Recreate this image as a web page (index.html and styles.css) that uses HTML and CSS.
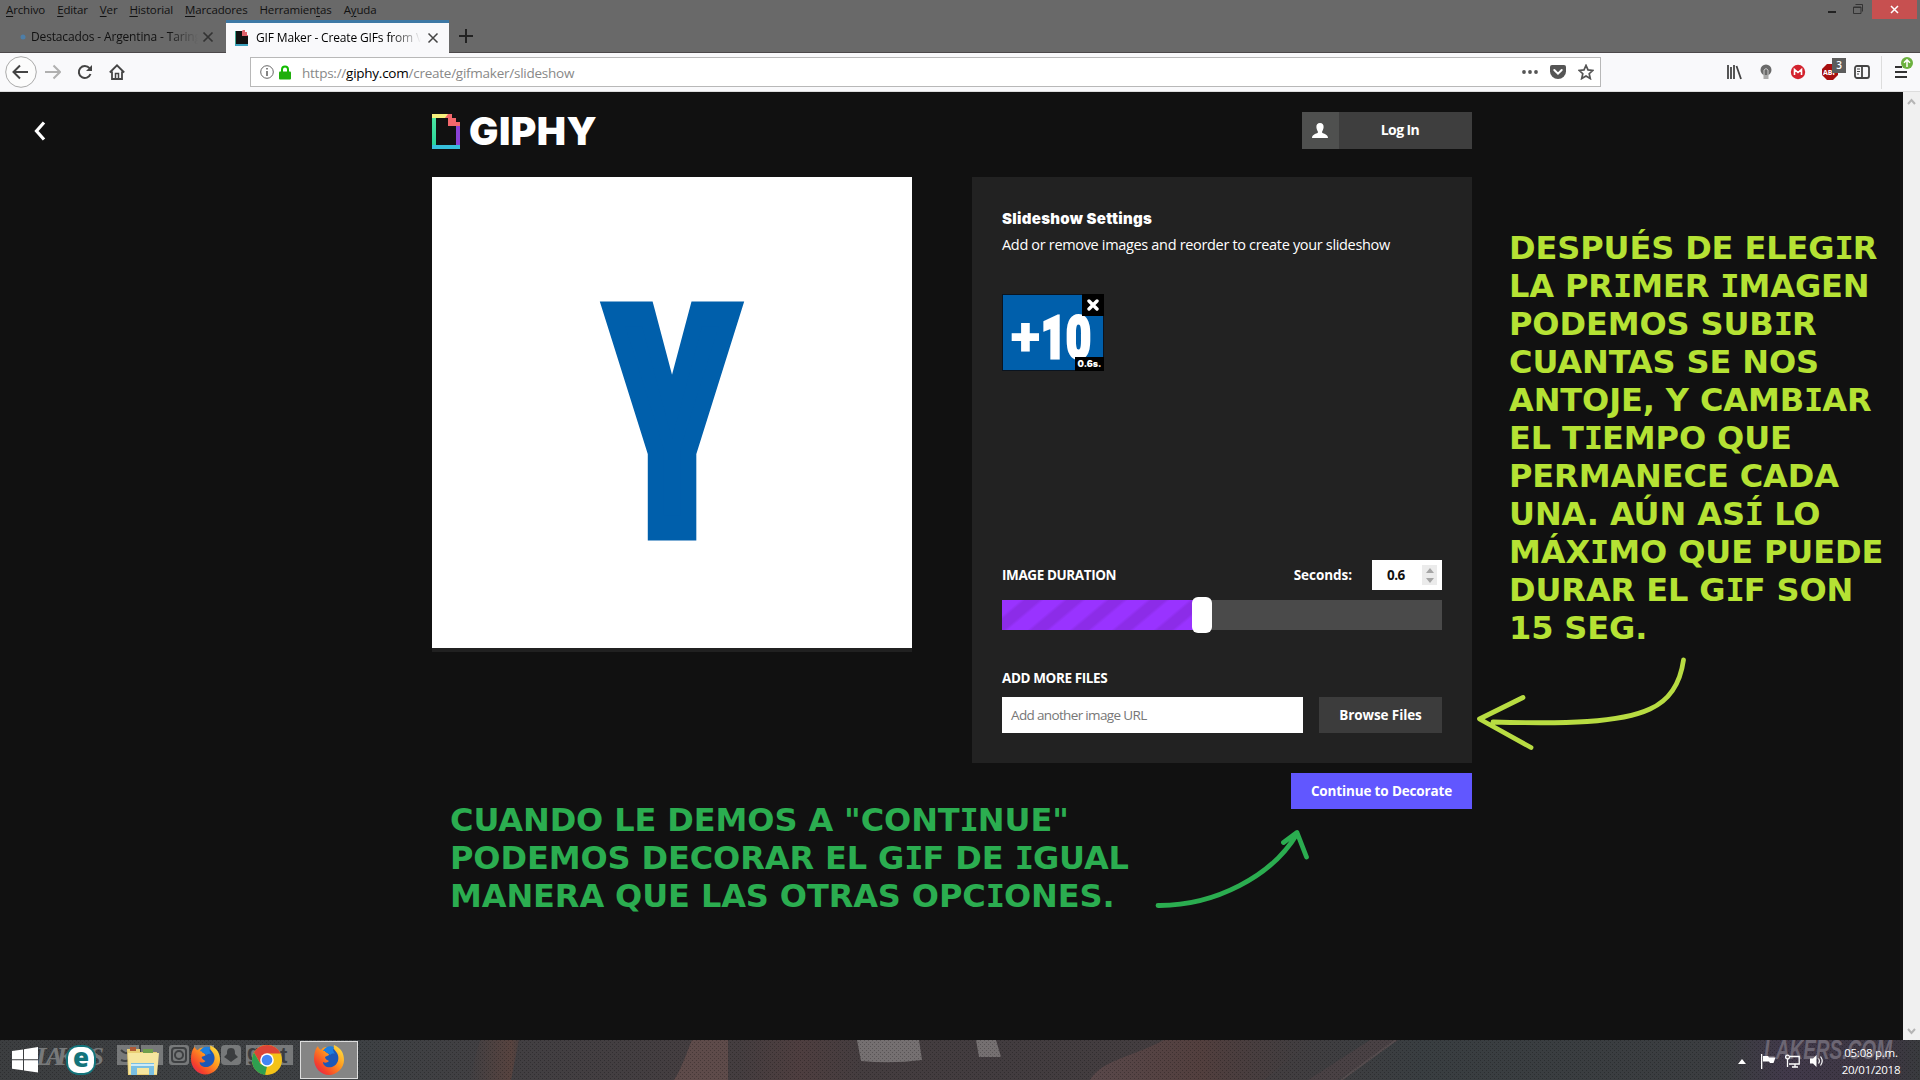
FILE: index.html
```html
<!DOCTYPE html>
<html lang="es">
<head>
  <meta charset="UTF-8">
  <title>GIF Maker - Create GIFs from Videos</title>
  <link rel="stylesheet" href="styles.css">
</head>
<body>
  <svg width="0" height="0" class="defs">
    <defs>
      <linearGradient id="foxBody" x1="1" y1="0" x2="0" y2="1">
        <stop offset="0" stop-color="#fff04a"/>
        <stop offset="0.4" stop-color="#ff9a1e"/>
        <stop offset="0.75" stop-color="#f5412c"/>
        <stop offset="1" stop-color="#d8176b"/>
      </linearGradient>
      <symbol id="firefox" viewBox="0 0 32 32">
        <circle cx="16" cy="16" r="12" fill="#1c58b8"/>
        <path d="M21 1c-1 4 1 5 3 8 3 5 1 12-5 14-5 1-9-1-9-5 2 1 4 1 6-1-2-1-4-2-4-4 1-1 3-1 4-2 0-2-3-2-4-4 0-2 1-3 2-4-3 0-5 1-6 3-2-1-3-3-3-4-3 3-4 8-4 13 0 9 7 16 15 16s15-7 15-15c0-7-3-12-10-15z" fill="url(#foxBody)"/>
        <path d="M10 7c2-4 7-6 11-4-2 3 0 5 1 7-2-1-4 0-5 1-1-2-4-2-5-4z" fill="#1d7fe0"/>
      </symbol>
    </defs>
  </svg>

  <div class="titlebar">
    <nav class="menubar">
      <span><u>A</u>rchivo</span>
      <span><u>E</u>ditar</span>
      <span><u>V</u>er</span>
      <span><u>H</u>istorial</span>
      <span><u>M</u>arcadores</span>
      <span>Herramien<u>t</u>as</span>
      <span>A<u>y</u>uda</span>
      <div class="window-buttons">
        <svg width="10" height="20" viewBox="0 0 10 20"><path d="M1 12h8" stroke="#222" stroke-width="2"/></svg>
        <svg width="12" height="20" viewBox="0 0 12 20" fill="none" stroke="#333"><path d="M1.500 7v6.500h7.500V7z M1 7.500h8M3.500 4.500h7v7"/></svg>
        <div class="close"><svg width="9" height="9" viewBox="0 0 9 9"><path d="M1 1l7 7M8 1l-7 7" stroke="#fff" stroke-width="1.500"/></svg></div>
      </div>
    </nav>
    <div class="tabs">
      <div class="tab">
        <svg class="favicon" width="6" height="12" viewBox="0 0 6 12"><circle cx="3" cy="6" r="2.500" fill="#4d7ea8"/></svg>
        <span class="tab-title">Destacados - Argentina - Taringa!</span>
        <svg class="tab-close" width="12" height="12" viewBox="0 0 12 12"><path d="M1.500 1.500l9 9M10.500 1.500l-9 9" stroke="#333" stroke-width="1.700"/></svg>
      </div>
      <div class="tab active">
        <svg class="favicon" width="14" height="16" viewBox="0 0 14 16"><path d="M0 1h8v14H0z" fill="#41a58f"/><path d="M1 1h7v5h5v8H1z" fill="#111"/><path d="M8 0h2v2h2v3h1v1H7V1z" fill="#e0626b"/><path d="M0 14h13v2H0z" fill="#3ba0bd"/></svg>
        <span class="tab-title">GIF Maker - Create GIFs from Videos</span>
        <svg class="tab-close" width="12" height="12" viewBox="0 0 12 12"><path d="M1.500 1.500l9 9M10.500 1.500l-9 9" stroke="#444" stroke-width="1.500"/></svg>
      </div>
      <svg class="new-tab" width="14" height="14" viewBox="0 0 14 14"><path d="M7 0v14M0 7h14" stroke="#222" stroke-width="2"/></svg>
    </div>
  </div>

  <div class="toolbar">
    <div class="nav-buttons">
      <svg class="back" width="32" height="32" viewBox="0 0 32 32" fill="none"><circle cx="16" cy="16" r="15.300" fill="#fcfcfc" stroke="#aaa"/><path d="M23 16H9M15 9.500L8.500 16l6.500 6.500" stroke="#444" stroke-width="2"/></svg>
      <svg width="16" height="16" viewBox="0 0 16 16" fill="none"><path d="M0 8h14M8.500 1.500L15 8l-6.500 6.500" stroke="#b0b0b0" stroke-width="2"/></svg>
      <svg width="16" height="16" viewBox="0 0 16 16" fill="none"><path d="M12.500 4.200A6 6 0 1 0 13.500 10" stroke="#444" stroke-width="2"/><path d="M15 1v6H9z" fill="#444"/></svg>
      <svg width="16" height="16" viewBox="0 0 16 16" fill="none"><path d="M.8 8.500L8 1.300l7.200 7.200M3 7.500V15h10V7.500" stroke="#444" stroke-width="1.800"/><path d="M6.500 15v-5.500h3V15" stroke="#444" stroke-width="1.500"/></svg>
    </div>
    <div class="urlbar">
      <svg width="14" height="14" viewBox="0 0 14 14" fill="none" stroke="#666"><circle cx="7" cy="7" r="6.300"/><path d="M7 6v5M7 3v1.600" stroke-width="1.600"/></svg>
      <svg class="lock" width="12" height="15" viewBox="0 0 12 15"><path d="M3 7V4.500a3 3 0 0 1 6 0V7" fill="none" stroke="#12bc00" stroke-width="2"/><rect y="6.500" width="12" height="8" rx="1" fill="#1fae0c"/></svg>
      <span class="url">https://<b>giphy.com</b>/create/gifmaker/slideshow</span>
      <div class="url-actions">
        <svg width="16" height="16" viewBox="0 0 16 16" fill="#555"><circle cx="2" cy="8" r="1.900"/><circle cx="8" cy="8" r="1.900"/><circle cx="14" cy="8" r="1.900"/></svg>
        <svg width="16" height="16" viewBox="0 0 16 16"><path d="M2 1h12a2 2 0 0 1 2 2v4.500a8 7.500 0 0 1-16 0V3a2 2 0 0 1 2-2z" fill="#555"/><path d="M4.300 6L8 9.600 11.700 6" fill="none" stroke="#fff" stroke-width="2" stroke-linecap="round"/></svg>
        <svg width="16" height="16" viewBox="0 0 16 16"><path d="M8 1.400l2 4.500 4.900.5-3.700 3.300 1.100 4.900L8 12.100l-4.300 2.500 1.100-4.900L1.100 6.400 6 5.900z" fill="none" stroke="#555" stroke-width="1.700"/></svg>
      </div>
    </div>
    <div class="extensions">
      <svg width="16" height="16" viewBox="0 0 16 16" stroke="#444" stroke-width="1.800"><path d="M2 1v14M5 3v12M8 1v14M10.500 2l4.500 13"/></svg>
      <svg width="16" height="16" viewBox="0 0 16 16"><circle cx="8" cy="6" r="5.500" fill="#6a6a6a"/><path d="M6 11V6q2-3 4 0v5" fill="none" stroke="#ccc"/><rect x="5.500" y="11" width="5" height="4" fill="#aaa"/></svg>
      <svg width="16" height="16" viewBox="0 0 16 16"><circle cx="8" cy="8" r="7.200" fill="#d3232e"/><path d="M4.500 11V5.500L8 8.500l3.500-3V11" fill="none" stroke="#fff" stroke-width="1.600"/></svg>
      <div class="abp">
        <svg width="16" height="16" viewBox="0 0 16 16"><path d="M5 0h6l5 5v6l-5 5H5l-5-5V5z" fill="#a80f0f"/><text x="1" y="11" class="abp-text">ABP</text></svg>
        <span class="badge">3</span>
      </div>
      <svg width="16" height="16" viewBox="0 0 16 16" fill="none" stroke="#444"><rect x="1" y="2" width="14" height="12" rx="2" stroke-width="1.800"/><path d="M8 2v12" stroke-width="1.800"/><path d="M3 5h3M3 7.500h3M3 10h2"/></svg>
    </div>
    <div class="app-menu">
      <svg width="12" height="16" viewBox="0 0 12 16" stroke="#333" stroke-width="2"><path d="M0 3h7M0 8h12M0 13h12"/></svg>
      <svg class="update" width="12" height="12" viewBox="0 0 12 12"><circle cx="6" cy="6" r="6" fill="#6cb13f"/><path d="M6 10V3M3 5.700L6 2.700l3 3" fill="none" stroke="#fff" stroke-width="1.500"/></svg>
    </div>
  </div>

  <div class="viewport">
    <main class="page">
      <svg class="page-back" width="14" height="20" viewBox="0 0 14 20"><path d="M11 1.500L3.500 10l7.500 8.500" fill="none" stroke="#fff" stroke-width="3.200"/></svg>
      <div class="content">
        <header class="header">
          <div class="logo">
            <svg width="28" height="35" viewBox="0 0 28 35">
              <defs><linearGradient id="lg" x1="0" y1="0" x2="0" y2="1"><stop offset="0" stop-color="#4de6a0"/><stop offset="1" stop-color="#27d39b"/></linearGradient></defs>
              <path d="M0 2h4v30H0z" fill="url(#lg)"/>
              <path d="M24 11h4v21h-4z" fill="#8a42d6"/>
              <path d="M0 0h16v4H0z" fill="#f6ef7c"/>
              <path d="M0 31h28v4H0z" fill="#36bfdc"/>
              <path d="M16 0h4v4h4v4h4v4H16V4h-3z" fill="#f2686c"/>
            </svg>
            <span>GIPHY</span>
          </div>
          <div class="login">
            <div class="login-icon">
              <svg width="16" height="15" viewBox="0 0 16 15"><path d="M8 0c2.600 0 3.800 1.800 3.600 4.300C11.400 6.500 10.500 8 10 9c0 2 6 1.500 6 6H0c0-4.500 6-4 6-6-.5-1-1.400-2.500-1.600-4.700C4.200 1.800 5.400 0 8 0z" fill="#fff"/></svg>
            </div>
            <span>Log In</span>
          </div>
        </header>
        <div class="columns">
          <div class="preview">
            <svg width="480" height="471" viewBox="0 0 480 471">
              <text class="big-letter" transform="translate(240 351) scale(.625 1)">Y</text>
            </svg>
          </div>
          <div class="side">
            <section class="panel">
              <h2>Slideshow Settings</h2>
              <p class="subtitle">Add or remove images and reorder to create your slideshow</p>
              <div class="thumbs">
                <div class="thumb">
                  <svg width="100" height="75" viewBox="0 0 100 75">
                    <text class="thumb-plus" x="7.500" y="61">+</text>
                    <text class="thumb-num" transform="translate(38 62.500) scale(.73 1)">10</text>
                  </svg>
                  <div class="remove"><svg width="12" height="12" viewBox="0 0 12 12"><path d="M2 2l8 8M10 2l-8 8" stroke="#fff" stroke-width="3.400" stroke-linecap="round"/></svg></div>
                  <span class="time">0.6s.</span>
                </div>
              </div>
              <div class="duration-row">
                <label>IMAGE DURATION</label>
                <span class="seconds">Seconds:</span>
                <div class="number">
                  <span>0.6</span>
                  <div class="spinner"><svg width="8" height="15" viewBox="0 0 8 15" fill="#a5a5a5"><path d="M4 0l4 5H0zM4 15l4-5H0z"/></svg></div>
                </div>
              </div>
              <div class="slider">
                <div class="slider-fill"></div>
                <div class="slider-handle"></div>
              </div>
              <label class="add-label">ADD MORE FILES</label>
              <div class="add-row">
                <div class="url-input">Add another image URL</div>
                <div class="browse">Browse Files</div>
              </div>
            </section>
            <div class="continue">Continue to Decorate</div>
          </div>
        </div>
      </div>
    </main>
    <div class="scrollbar">
      <svg width="9" height="7" viewBox="0 0 9 7"><path d="M1 6l3.500-4L8 6" fill="none" stroke="#b5b5b5" stroke-width="2"/></svg>
      <svg width="9" height="7" viewBox="0 0 9 7"><path d="M1 1l3.500 4L8 1" fill="none" stroke="#b5b5b5" stroke-width="2"/></svg>
    </div>
  </div>

  <div class="taskbar">
    <!-- wallpaper showing through the bar -->
    <svg class="wallpaper" width="1920" height="40" viewBox="0 0 1920 40">
      <defs>
        <linearGradient id="wall" x1="0" x2="1" y1="0" y2="0">
          <stop offset="0" stop-color="#3c3e40"/><stop offset="0.190" stop-color="#3e4144"/>
          <stop offset="0.270" stop-color="#423f42"/><stop offset="0.420" stop-color="#453d3f"/>
          <stop offset="0.520" stop-color="#423c3f"/><stop offset="0.650" stop-color="#443e40"/>
          <stop offset="0.740" stop-color="#393e41"/><stop offset="0.900" stop-color="#3b3d40"/>
          <stop offset="0.930" stop-color="#41394a"/><stop offset="0.985" stop-color="#3d3742"/><stop offset="1" stop-color="#393b3e"/>
        </linearGradient>
        <linearGradient id="skin" x1="0" x2="1" y1="0" y2="0">
          <stop offset="0" stop-color="#57433f" stop-opacity="0"/><stop offset="0.850" stop-color="#57433f"/><stop offset="1" stop-color="#57433f" stop-opacity=".4"/>
        </linearGradient>
        <linearGradient id="arm" x1="0" x2="1" y1="0" y2="0">
          <stop offset="0" stop-color="#59484a"/><stop offset="0.500" stop-color="#523f3e"/><stop offset="1" stop-color="#443c3e" stop-opacity="0"/>
        </linearGradient>
        <linearGradient id="glow" x1="0" x2="1" y1="0" y2="0">
          <stop offset="0" stop-color="#543f40" stop-opacity="0"/><stop offset="0.500" stop-color="#543f40" stop-opacity=".6"/><stop offset="1" stop-color="#543f40" stop-opacity="0"/>
        </linearGradient>
        <pattern id="dots" width="4" height="4" patternUnits="userSpaceOnUse"><path d="M0 0h1v1H0zM2 2h1v1H2z" fill="#000" opacity=".25"/></pattern>
      </defs>
      <rect width="1920" height="40" fill="url(#wall)"/>
      <path d="M480 0h39l-8 40h-42z" fill="url(#skin)"/>
      <path d="M692 0h36v40h-54c8-12 12-26 18-40z" fill="#5e4b4a"/>
      <path d="M740 0h120v40H740z" fill="url(#glow)"/>
      <path d="M1164 0h150l-50 40H1090c12-20 40-22 74-40z" fill="url(#arm)"/>
      <path d="M1370 0h28l-60 40h-30z" fill="#494144"/>
      <path d="M1396 0l-55 40" stroke="#554c4e" stroke-width="2"/>
      <path d="M857 0h62l3 20q-30 4-61 1zM976 0h20l5 17h-22z" fill="#757071"/>
      <rect width="1920" height="40" fill="url(#dots)"/>
      <text class="mark-left" x="36" y="25" textLength="68">LAKERS</text>
      <g fill="#77797a">
        <path d="M117 5h22v20h-22zM141 5h22v20h-22zM194 5h20v20h-20zM246 5h22v20h-22zM270 5h23v20h-23z"/>
        <rect x="169" y="5" width="20" height="20" rx="3"/><rect x="221" y="5" width="20" height="20" rx="4"/>
      </g>
      <g fill="none" stroke="#3e4042" stroke-width="2">
        <rect x="172" y="8" width="14" height="14" rx="3"/><circle cx="179" cy="15" r="4"/>
        <path d="M121 10c4 4 6 4 8 1 3-3 4 1 6 0-2 8-8 12-14 9"/>
      </g>
      <path d="M231 8c4 0 4 3 4 6l3 3-3 2-4 3-4-3-3-2 3-3c0-3 0-6 4-6z" fill="#3b3d3f"/>
      <text class="mark-letter" x="247" y="20">g</text>
      <text class="mark-letter" x="280" y="23">t</text>
      <text class="mark-right" x="1764" y="19" textLength="128" lengthAdjust="spacingAndGlyphs">LAKERS.COM</text>
    </svg>
    <div class="apps">
      <svg class="start" width="26" height="26" viewBox="0 0 26 26" fill="#fff"><path d="M0 4l11-1.600V12.300H0zM12 2.200L26 0v12.300H12zM0 13.300h11v9.900L0 21.700zM12 13.300h14V25.500l-14-2.100z"/></svg>
      <svg class="eset" width="32" height="32" viewBox="0 0 32 32"><rect x="1" y="1" width="30" height="30" rx="13" fill="#13747b"/><rect x="3" y="3" width="26" height="26" rx="10" fill="#fff"/><text x="8" y="23">e</text></svg>
      <svg class="explorer" width="34" height="30" viewBox="0 0 34 30"><path d="M1 3h13v3h17v23H2z" fill="#e9cf76"/><path d="M4 1h6v4H4z" fill="#b05a36"/><path d="M17 3h10v5H17z" fill="#6f9f4d"/><path d="M2 7h31l-2 21H3z" fill="#f6e6a0"/><path d="M5 29V17h23v12h-5v-7H11v7z" fill="#79bfe3"/><path d="M5 19h23" stroke="#cdeaf7" stroke-width="2"/></svg>
      <svg class="fox" width="31" height="32"><use href="#firefox"/></svg>
      <svg class="chrome" width="30" height="30" viewBox="0 0 30 30"><circle cx="15" cy="15" r="15" fill="#f4c318"/><path d="M15 0a15 15 0 0 1 13.500 8.500H15L8 18 2 7.500A15 15 0 0 1 15 0z" fill="#dc4437"/><path d="M2 7.500L8.500 19 15 21.500 13 30A15 15 0 0 1 2 7.500z" fill="#2f9e50"/><circle cx="15" cy="15" r="6.800" fill="#fff"/><circle cx="15" cy="15" r="5.300" fill="#4285f4"/></svg>
      <div class="app-active"><svg width="32" height="32"><use href="#firefox"/></svg></div>
    </div>
    <div class="tray">
      <svg width="8" height="5" viewBox="0 0 8 5"><path d="M4 0l4 5H0z" fill="#fff"/></svg>
      <svg class="flag" width="15" height="15" viewBox="0 0 15 15" fill="#fff"><path d="M0 0h1.300v15H0zM2 2h5l1 1.500h6.500L12.500 9H9L8 7.500H2z"/></svg>
      <svg class="network" width="15" height="14" viewBox="0 0 15 14" fill="none" stroke="#fff" stroke-width="1.300"><path d="M5 2.500h9.200v7.500H4M7 13h6M10 10v3M2.500 5v8"/><circle cx="2.500" cy="3" r="1.900"/></svg>
      <svg class="sound" width="14" height="14" viewBox="0 0 14 14"><path d="M0 4.500h3L6.500 1v12L3 9.500H0z" fill="#fff"/><path d="M8.500 4.500q1.800 2.500 0 5M10.500 2.500q3.400 4.500 0 9" fill="none" stroke="#fff" stroke-width="1.200"/></svg>
      <div class="clock"><span>05:08 p.m.</span><span>20/01/2018</span></div>
    </div>
  </div>

  <!-- notes drawn over the page, capital I with serifs -->
  <p class="note note-lime">DESPUÉS DE ELEG<i>I</i>R<br>LA PR<i>I</i>MER <i>I</i>MAGEN<br>PODEMOS SUB<i>I</i>R<br>CUANTAS SE NOS<br>ANTOJE, Y CAMB<i>I</i>AR<br>EL T<i>I</i>EMPO QUE<br>PERMANECE CADA<br>UNA. AÚN AS<i>Í</i> LO<br>MÁX<i>I</i>MO QUE PUEDE<br>DURAR EL G<i>I</i>F SON<br>15 SEG.</p>
  <p class="note note-green">CUANDO LE DEMOS A "CONT<i>I</i>NUE"<br>PODEMOS DECORAR EL G<i>I</i>F DE <i>I</i>GUAL<br>MANERA QUE LAS OTRAS OPC<i>I</i>ONES.</p>
  <svg class="arrow arrow-lime" width="220" height="100" viewBox="1470 655 220 100"><path d="M1683.500 660C1680 685 1668 701 1650 709C1620 723 1565 724 1493 722M1523 697.500L1479.500 719L1531 747.500"/></svg>
  <svg class="arrow arrow-green" width="160" height="90" viewBox="1152 825 160 90"><path d="M1158 905.500C1215 906 1272 876 1297 834M1283.500 842.500L1297 832.500L1306.500 857"/></svg>
</body>
</html>
```

FILE: styles.css
```css
* {
  box-sizing: border-box;
  margin: 0;
  padding: 0;
}

body {
  width: 1920px;
  height: 1080px;
  display: flex;
  flex-direction: column;
  position: relative;
  overflow: hidden;
  background-color: #111;
  font-family: "Open Sans", "Noto Sans", sans-serif;
}

svg {
  display: block;
  flex-shrink: 0;
}

.defs {
  position: absolute;
}

/* Browser window */
.titlebar {
  height: 53px;
  background-color: #696969;
  border-bottom: 1px solid #4c484a;
}

.menubar {
  height: 20px;
  display: flex;
  align-items: center;
  gap: 12px;
  padding-left: 6px;
  font-size: 11.5px;
  line-height: 16px;
  letter-spacing: -0.14px;
  color: #111;
}

.menubar > span {
  padding-bottom: 1px;
}

.menubar u {
  text-underline-offset: 2px;
}

.window-buttons {
  display: flex;
  margin-left: auto;
  height: 20px;
}

.window-buttons svg:nth-child(2) {
  margin: 0 8px 0 15px;
}

.close {
  width: 45px;
  height: 19px;
  margin-right: 3px;
  display: flex;
  align-items: center;
  justify-content: center;
  background-color: #c75050;
}

.tabs {
  height: 33px;
  display: flex;
  align-items: stretch;
}

.tab {
  width: 226px;
  display: flex;
  align-items: center;
  padding: 1px 12px 0 20px;
  font-size: 12px;
  letter-spacing: -0.15px;
  color: #111;
}

.tab-title {
  flex: 1;
  margin: 0 4px 2px 5px;
  white-space: nowrap;
  overflow: hidden;
  -webkit-mask-image: linear-gradient(to right, #000 82%, transparent 100%);
  mask-image: linear-gradient(to right, #000 82%, transparent 100%);
}

.tab.active {
  width: 223px;
  padding: 0 10px 0 9px;
  background-color: #f9f9fb;
  border-top: 3px solid #3d78a5;
  color: #000;
}

.active .tab-title {
  margin: 0 6px 2px 7px;
}

.new-tab {
  margin: 9px 0 0 10px;
}

.toolbar {
  height: 39px;
  display: flex;
  align-items: center;
  background-color: #f9f9fb;
  border-bottom: 1px solid #ddd;
}

.nav-buttons {
  width: 250px;
  display: flex;
  align-items: center;
  gap: 16px;
  padding-left: 5px;
}

.back {
  margin-right: -8px;
}

.urlbar {
  width: 1351px;
  height: 30px;
  display: flex;
  align-items: center;
  padding: 0 6px 0 9px;
  background-color: #fff;
  border: 1px solid #b8b8b8;
}

.lock {
  margin: 0 11px 0 5px;
}

.url {
  font-size: 13.5px;
  letter-spacing: -0.25px;
  color: #888;
  padding-top: 2px;
}

.url b {
  font-weight: 400;
  color: #000;
}

.url-actions {
  display: flex;
  gap: 12px;
  margin-left: auto;
}

.extensions {
  display: flex;
  gap: 16px;
  padding: 0 11px 0 125px;
}

.abp {
  position: relative;
}

.abp-text {
  font: bold 7px "Open Sans", sans-serif;
  fill: #fff;
}

.badge {
  position: absolute;
  left: 10px;
  top: -6px;
  width: 14px;
  height: 15px;
  background-color: #5c5c5c;
  color: #fff;
  font-size: 10px;
  font-weight: 600;
  line-height: 15px;
  text-align: center;
}

.app-menu {
  position: relative;
  height: 33px;
  display: flex;
  align-items: center;
  padding-left: 13px;
  border-left: 1px solid #ddd;
}

.update {
  position: absolute;
  left: 19px;
  top: 1px;
}

/* Page */
.viewport {
  height: 948px;
  display: flex;
}

.page {
  flex: 1;
  display: flex;
  background-color: #111;
  color: #fff;
}

.page-back {
  margin: 29px 385px 0 33px;
}

.content {
  width: 1040px;
}

.header {
  height: 85px;
  display: flex;
  justify-content: space-between;
  padding-top: 20px;
}

.logo {
  height: 39px;
  display: flex;
  align-items: center;
  gap: 9px;
}

.logo span {
  font: 900 39px/38px Inter, sans-serif;
  letter-spacing: 0.5px;
  padding-bottom: 1px;
}

.login {
  width: 170px;
  height: 37px;
  display: flex;
  background-color: #3e3e3e;
  font: bold 14px/36px "Open Sans", sans-serif;
  letter-spacing: -0.6px;
}

.login-icon {
  width: 37px;
  display: flex;
  align-items: center;
  justify-content: center;
  padding-right: 2px;
  background-color: #4f504f;
}

.login span {
  flex: 1;
  text-align: center;
  padding-right: 11px;
}

.columns {
  display: flex;
  gap: 60px;
}

.preview {
  width: 480px;
  height: 475px;
  background-color: #fff;
  border-bottom: 4px solid #212121;
}

.big-letter {
  font: 900 301px Roboto, sans-serif;
  text-anchor: middle;
  fill: #005fab;
  stroke: #005fab;
  stroke-width: 21px;
  vector-effect: non-scaling-stroke;
}

.side {
  width: 500px;
}

.panel {
  height: 586px;
  padding: 30px;
  background-color: #222;
}

.panel h2 {
  font: 900 15px/24px Inter, sans-serif;
  letter-spacing: 0.3px;
}

.subtitle {
  font-size: 14.5px;
  line-height: 28px;
  letter-spacing: -0.33px;
  white-space: nowrap;
}

.thumbs {
  height: 266px;
  padding-top: 35px;
}

.thumb {
  position: relative;
  width: 102px;
  height: 77px;
  border: 1px solid #0a1420;
  background-color: #005fab;
}

.thumb-plus {
  font: 900 56px Roboto, sans-serif;
  fill: #fff;
}

.thumb-num {
  font: 900 59px Roboto, sans-serif;
  fill: #fff;
  stroke: #fff;
  stroke-width: 3px;
}

.remove {
  position: absolute;
  right: -1px;
  top: -1px;
  width: 22px;
  height: 22px;
  display: flex;
  align-items: center;
  justify-content: center;
  background-color: #000;
}

.time {
  position: absolute;
  right: -1px;
  bottom: -1px;
  width: 29px;
  height: 14px;
  background-color: #000;
  font: 900 9px/13px Inter, sans-serif;
  text-align: center;
}

.duration-row {
  height: 30px;
  display: flex;
  align-items: center;
  margin-top: 35px;
}

.panel label,
.seconds {
  font-size: 13.5px;
  font-weight: 700;
  letter-spacing: -0.4px;
}

.panel .seconds {
  margin-left: auto;
  margin-right: 20px;
  letter-spacing: -0.05px;
}

.number {
  width: 70px;
  height: 30px;
  display: flex;
  align-items: center;
  justify-content: space-between;
  padding: 0 5px 0 15px;
  background-color: #fff;
  color: #111;
  font-size: 13.5px;
  font-weight: 700;
  letter-spacing: -0.5px;
}

.spinner {
  width: 15px;
  height: 20px;
  display: flex;
  align-items: center;
  justify-content: center;
  background-color: #ebebeb;
}

.slider {
  height: 30px;
  display: flex;
  align-items: center;
  margin-top: 10px;
  background-color: #4a4a4a;
}

.slider-fill {
  width: 192px;
  height: 30px;
  background: repeating-linear-gradient(140deg, #9933ff 0, #9933ff 12px, #8c2ce8 15px, #8c2ce8 24px, #9933ff 27px);
}

.slider-handle {
  width: 20px;
  height: 36px;
  margin-left: -2px;
  border-radius: 6px;
  background-color: #fff;
}

.add-label {
  display: block;
  margin-top: 38px;
  line-height: 20px;
}

.add-row {
  display: flex;
  gap: 16px;
  margin-top: 9px;
}

.url-input {
  width: 301px;
  height: 36px;
  padding-left: 9px;
  background-color: #fff;
  color: #777;
  font-size: 13.5px;
  line-height: 36px;
  letter-spacing: -0.65px;
}

.browse {
  flex: 1;
  background-color: #3c3c3c;
  font-size: 13.5px;
  font-weight: 700;
  line-height: 36px;
  letter-spacing: -0.1px;
  text-align: center;
}

.continue {
  width: 181px;
  height: 36px;
  margin: 10px 0 0 auto;
  background-color: #6157ff;
  font-size: 13.5px;
  font-weight: 700;
  line-height: 36px;
  letter-spacing: -0.15px;
  text-align: center;
}

.scrollbar {
  width: 17px;
  display: flex;
  flex-direction: column;
  align-items: center;
  justify-content: space-between;
  padding: 6px 0 5px;
  background-color: #f0f0f0;
}

/* Taskbar */
.taskbar {
  position: relative;
  height: 40px;
  display: flex;
  justify-content: space-between;
}

.wallpaper {
  position: absolute;
  left: 0;
  top: 0;
}

.mark-left {
  font: italic bold 26px "Liberation Serif", serif;
  fill: #77797a;
}

.mark-letter {
  font: bold 22px "Liberation Sans", sans-serif;
  fill: #3b3d3f;
}

.mark-right {
  font: italic bold 28px "Liberation Sans", sans-serif;
  fill: #6c6673;
}

.apps,
.tray {
  position: relative;
  display: flex;
  align-items: center;
}

.start {
  margin: 0 27px 0 12px;
}

.eset text {
  font: 900 26px "Open Sans", sans-serif;
  fill: #13747b;
}

.explorer {
  margin: 2px 30px 0 29px;
}

.chrome {
  margin: 0 18px 0 31px;
}

.app-active {
  width: 58px;
  height: 38px;
  display: flex;
  align-items: center;
  justify-content: center;
  background-color: #858585;
  border: 1px solid #ddd;
}

.tray {
  padding-right: 18px;
}

.tray > svg {
  margin-top: 2px;
}

.tray .flag {
  margin-left: 15px;
}

.tray .network {
  margin-left: 9px;
}

.tray .sound {
  margin-left: 10px;
}

.clock {
  width: 62px;
  margin-left: 16px;
  display: flex;
  flex-direction: column;
  align-items: center;
  padding-top: 2px;
  color: #fff;
  font-size: 11.5px;
  line-height: 17px;
  letter-spacing: -0.25px;
}

/* Notes */
.note {
  position: absolute;
  font: bold 32px/38px "DejaVu Sans", Verdana, sans-serif;
  letter-spacing: -0.1px;
  white-space: nowrap;
}

.note i {
  font-family: "DejaVu Sans Mono", monospace;
  font-style: normal;
  letter-spacing: -1px;
  line-height: 1;
}

.note-lime {
  left: 1509px;
  top: 229px;
  color: #b5e234;
}

.note-green {
  left: 450px;
  top: 801px;
  color: #2bad50;
}

.arrow {
  position: absolute;
  fill: none;
  stroke-width: 4.800px;
  stroke-linecap: round;
  stroke-linejoin: round;
}

.arrow-lime {
  left: 1470px;
  top: 655px;
  stroke: #b8dc42;
}

.arrow-green {
  left: 1152px;
  top: 825px;
  stroke: #2bad50;
}
```
